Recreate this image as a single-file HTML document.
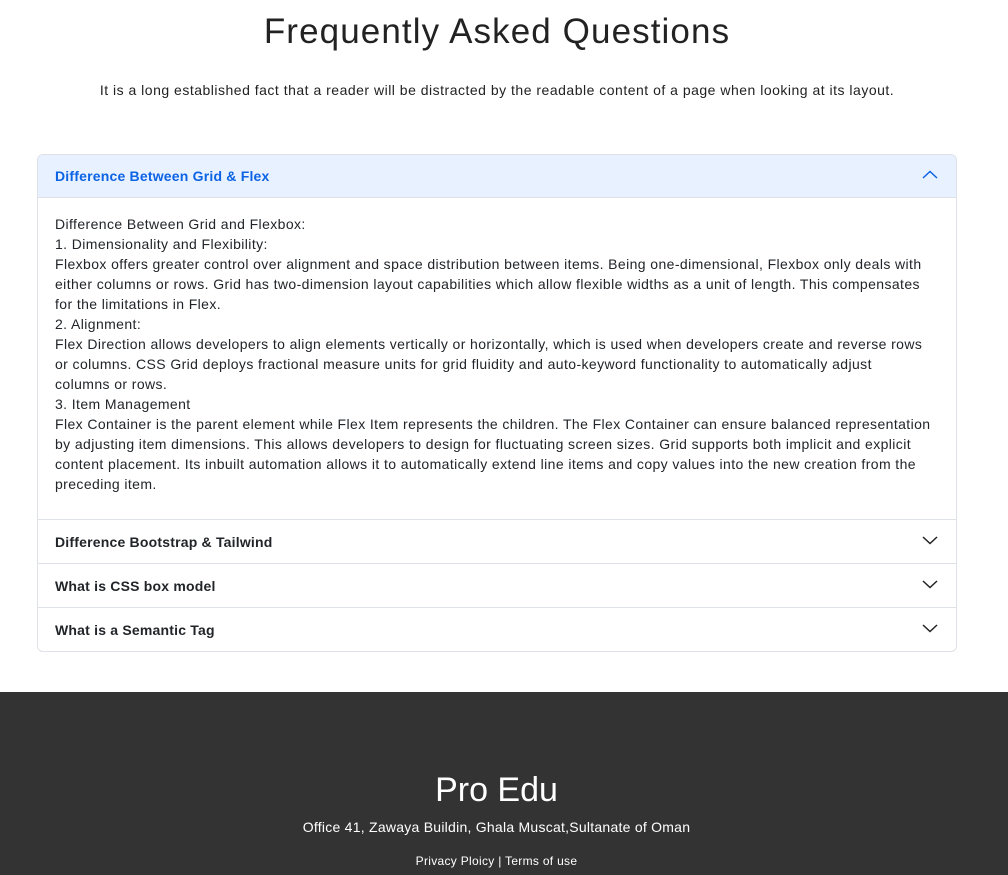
<!DOCTYPE html>
<html><head><meta charset="utf-8"><style>
*{margin:0;padding:0;box-sizing:border-box}
body{width:1008px;height:875px;background:#fff;font-family:"Liberation Sans",sans-serif;color:#212529;overflow:hidden;position:relative}
h1{position:absolute;top:12px;left:0;width:994px;text-align:center;font-size:35px;font-weight:400;color:#222;letter-spacing:1.1px}
.sub{position:absolute;top:82px;left:0;width:994px;text-align:center;font-size:14px;letter-spacing:0.5px;color:#222}
.acc{position:absolute;top:154px;left:37px;width:920px;border:1px solid #dee2e6;border-radius:6px;overflow:hidden}
.hd{height:44px;display:flex;align-items:center;padding:0 17px;font-size:14px;font-weight:700;border-top:1px solid #dee2e6;position:relative;color:#212529;letter-spacing:0.2px}
.hd.first{border-top:none;background:#e7f1ff;color:#0c63e4;height:43px;border-bottom:1px solid #dee2e6}
.hd svg{position:absolute;right:18px;top:15px}
.bd{padding:16px 17px 17px;font-size:14px;line-height:20px;white-space:nowrap;letter-spacing:0.4px;height:321px}
footer{position:absolute;top:692px;left:0;width:1008px;height:183px;background:#333;color:#fff;text-align:center}
footer div{left:0;width:993px}
footer .t{position:absolute;top:79px;font-size:34px}
footer .a{position:absolute;top:127px;font-size:14px;letter-spacing:0.25px}
footer .p{position:absolute;top:162px;font-size:12px;letter-spacing:0.3px}
</style></head><body>
<h1>Frequently Asked Questions</h1>
<div class="sub">It is a long established fact that a reader will be distracted by the readable content of a page when looking at its layout.</div>
<div class="acc">
<div class="hd first">Difference Between Grid &amp; Flex<svg width="16" height="10" viewBox="0 0 16 10"><path d="M1 8 L8 1.5 L15 8" fill="none" stroke="#0c63e4" stroke-width="1.5"/></svg></div>
<div class="bd">Difference Between Grid and Flexbox:<br>1. Dimensionality and Flexibility:<br>Flexbox offers greater control over alignment and space distribution between items. Being one-dimensional, Flexbox only deals with<br>either columns or rows. Grid has two-dimension layout capabilities which allow flexible widths as a unit of length. This compensates<br>for the limitations in Flex.<br>2. Alignment:<br>Flex Direction allows developers to align elements vertically or horizontally, which is used when developers create and reverse rows<br>or columns. CSS Grid deploys fractional measure units for grid fluidity and auto-keyword functionality to automatically adjust<br>columns or rows.<br>3. Item Management<br>Flex Container is the parent element while Flex Item represents the children. The Flex Container can ensure balanced representation<br>by adjusting item dimensions. This allows developers to design for fluctuating screen sizes. Grid supports both implicit and explicit<br>content placement. Its inbuilt automation allows it to automatically extend line items and copy values into the new creation from the<br>preceding item.</div>
<div class="hd">Difference Bootstrap &amp; Tailwind<svg width="16" height="10" viewBox="0 0 16 10"><path d="M1 2 L8 8.5 L15 2" fill="none" stroke="#222" stroke-width="1.5"/></svg></div>
<div class="hd">What is CSS box model<svg width="16" height="10" viewBox="0 0 16 10"><path d="M1 2 L8 8.5 L15 2" fill="none" stroke="#222" stroke-width="1.5"/></svg></div>
<div class="hd">What is a Semantic Tag<svg width="16" height="10" viewBox="0 0 16 10"><path d="M1 2 L8 8.5 L15 2" fill="none" stroke="#222" stroke-width="1.5"/></svg></div>
</div>
<footer><div class="t">Pro Edu</div><div class="a">Office 41, Zawaya Buildin, Ghala Muscat,Sultanate of Oman</div><div class="p">Privacy Ploicy | Terms of use</div></footer>
</body></html>
